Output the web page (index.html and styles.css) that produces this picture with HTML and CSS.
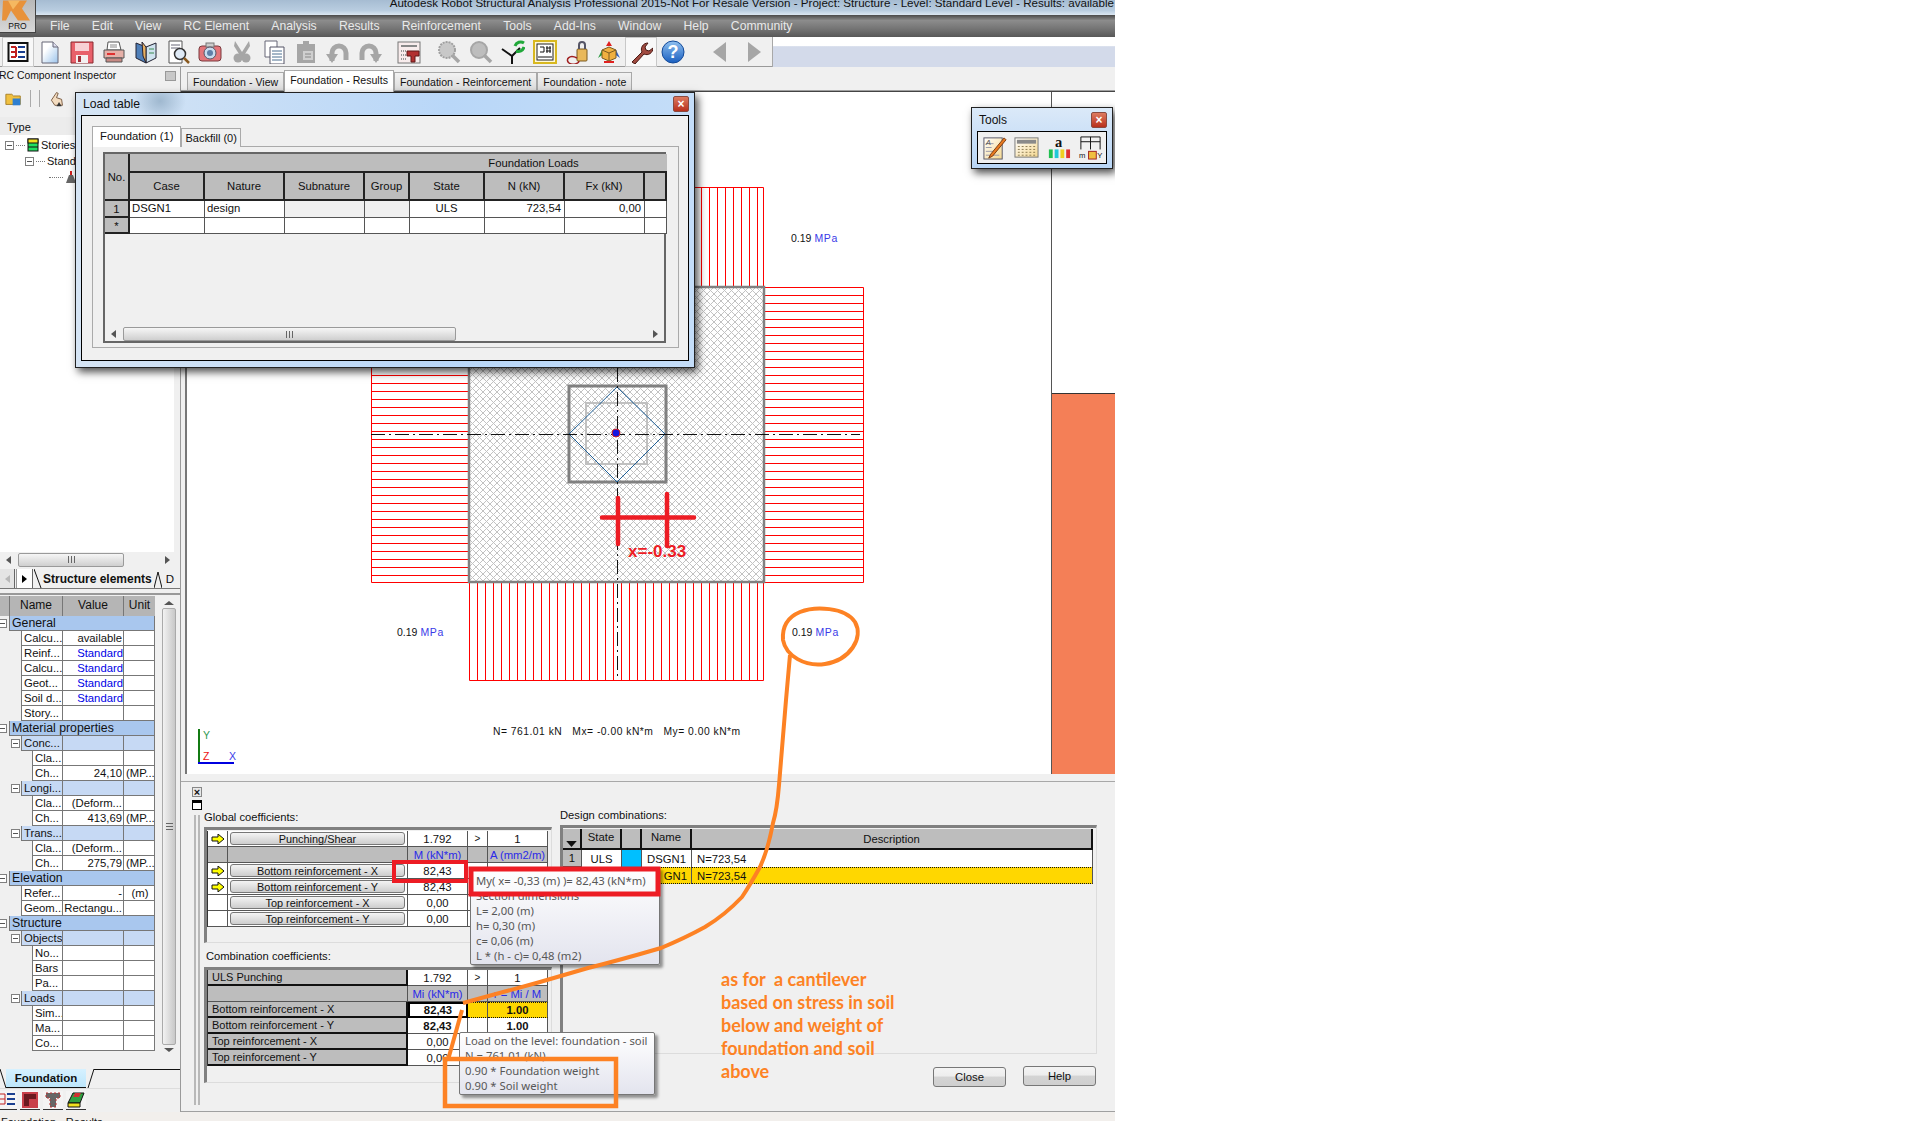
FILE: index.html
```html
<!DOCTYPE html>
<html lang="en">
<head>
    <meta charset="UTF-8">
    <title>Autodesk Robot Structural Analysis - Foundation Results</title>
    <link rel="stylesheet" href="styles.css">
</head>
<body>
<svg class="defs" aria-hidden="true">
    <defs>
        <linearGradient id="docfill" x1="0" y1="0" x2="1" y2="1"><stop offset="0.3" stop-color="#fff"/><stop offset="1" stop-color="#9cc4ec"/></linearGradient>
        <linearGradient id="helpfill" x1="0" y1="0" x2="0" y2="1"><stop offset="0" stop-color="#8fc0f0"/><stop offset="1" stop-color="#1a5fc0"/></linearGradient>
        <linearGradient id="padfill" x1="0" y1="0" x2="1" y2="1"><stop offset="0" stop-color="#fff"/><stop offset="1" stop-color="#f5d890"/></linearGradient>
        <pattern id="hatch-h" patternUnits="userSpaceOnUse" width="8" height="8" y="287"><rect width="8" height="1" fill="#ff0000"/></pattern>
        <pattern id="hatch-v" patternUnits="userSpaceOnUse" width="8" height="8" x="469"><rect width="1" height="8" fill="#ff0000"/></pattern>
        <pattern id="cross" patternUnits="userSpaceOnUse" width="7" height="7"><path d="M0 0L7 7M7 0L0 7" stroke="#c2c2c2" stroke-width="1" fill="none"/></pattern>
    </defs>
</svg>

<div class="app">
    <div class="titlebar"><span>Autodesk Robot Structural Analysis Professional 2015-Not For Resale Version - Project: Structure - Level: Standard Level - Results: available</span></div>

    <nav class="menubar">
        <span>File</span><span>Edit</span><span>View</span><span>RC Element</span><span>Analysis</span><span>Results</span><span>Reinforcement</span><span>Tools</span><span>Add-Ins</span><span>Window</span><span>Help</span><span>Community</span>
    </nav>

    <div class="toolbar">
        <div class="tb-btn on"><svg viewBox="0 0 24 24"><rect x="2.5" y="3" width="19" height="18" fill="#fff" stroke="#111" stroke-width="2"/><path d="M5 7h5M5 12h5M5 17h5M10 7v10" stroke="#c02020" stroke-width="2" fill="none"/><path d="M12 7h7M12 12h7M12 17h7" stroke="#1a3f90" stroke-width="2"/></svg></div>
        <div class="tb-btn"><svg viewBox="0 0 24 24"><path d="M4 2h11l5 5v16H4z" fill="url(#docfill)" stroke="#667" stroke-width="1"/><path d="M15 2v5h5" fill="#dde" stroke="#667"/></svg></div>
        <div class="tb-btn"><svg viewBox="0 0 24 24"><path d="M1 2h22v21H1z" fill="#e8606a" stroke="#8a2a30"/><rect x="5" y="3" width="14" height="8" fill="#f8d0d4"/><rect x="6" y="15" width="12" height="8" fill="#f3f0f0"/><rect x="8" y="16" width="3" height="6" fill="#a03038"/></svg></div>
        <div class="tb-btn"><svg viewBox="0 0 24 24"><path d="M6 2h11l2 8H5z" fill="#fff" stroke="#555"/><path d="M8 5h7M8 7h7" stroke="#888"/><path d="M2 10h20v8H2z" fill="#e6b0a8" stroke="#555"/><path d="M4 18h16v4H4z" fill="#c78a84" stroke="#555"/><path d="M5 14h8" stroke="#e03030" stroke-width="2"/></svg></div>
        <div class="tb-btn"><svg viewBox="0 0 24 24"><path d="M12 7L2 3v15l10 5z" fill="#4f7fb8" stroke="#223"/><path d="M12 7l10-4v15l-10 5z" fill="#cfe2ee" stroke="#223"/><path d="M12 7l-4-5 1 14 3 7z" fill="#e8b060" stroke="#223"/><path d="M15 9h5M15 13h5" stroke="#3a8a50"/></svg></div>
        <div class="tb-btn"><svg viewBox="0 0 24 24"><path d="M3 1h13v22H3z" fill="#fff" stroke="#555"/><path d="M5 5h9M5 8h9" stroke="#667"/><circle cx="14" cy="14" r="5.5" fill="#dfeaf6" stroke="#333" stroke-width="1.5"/><path d="M18 18l5 5" stroke="#8a5a20" stroke-width="2.5"/></svg></div>
        <div class="tb-btn"><svg viewBox="0 0 24 24"><rect x="1" y="6" width="22" height="15" rx="3" fill="#e4757a" stroke="#7a3a3e"/><rect x="8" y="3" width="8" height="4" fill="#ccc" stroke="#777"/><circle cx="12" cy="13" r="6" fill="#c8dcee" stroke="#556"/><circle cx="12" cy="13" r="3" fill="#5f7fa8"/></svg></div>
        <div class="tb-btn"><svg viewBox="0 0 24 24"><path d="M5 1l7 11 7-11 1 5-5 8-3 3-3-3L4 6z" fill="#a6a6a6"/><circle cx="8" cy="18" r="4.500" fill="#a6a6a6"/><circle cx="16" cy="18" r="4.500" fill="#a6a6a6"/></svg></div>
        <div class="tb-btn"><svg viewBox="0 0 24 24"><path d="M3 1h12v16H3z" fill="#fff" stroke="#667"/><path d="M8 7h14v17H8z" fill="#fff" stroke="#556"/><path d="M10 11h10M10 14h10M10 17h10M10 20h10" stroke="#4a6f90"/></svg></div>
        <div class="tb-btn"><svg viewBox="0 0 24 24"><path d="M3 4h6V1h6v3h6v19H3z" fill="#a6a6a6"/><path d="M9 11h10v9H9z" fill="#cfcfcf"/><path d="M11 14h6M11 17h6" stroke="#888"/></svg></div>
        <div class="tb-btn"><svg viewBox="0 0 24 24"><path d="M6 21V13a7 7 0 0 1 14 0v7" fill="none" stroke="#a6a6a6" stroke-width="5"/><path d="M0 14l6 9 6-9z" fill="#a6a6a6"/></svg></div>
        <div class="tb-btn"><svg viewBox="0 0 24 24"><path d="M18 21V13a7 7 0 0 0-14 0v7" fill="none" stroke="#a6a6a6" stroke-width="5"/><path d="M24 14l-6 9-6-9z" fill="#a6a6a6"/></svg></div>
        <div class="tb-btn mt"><svg viewBox="0 0 24 24"><rect x="1" y="2" width="22" height="21" fill="#f8ecec" stroke="#777"/><path d="M4 6h16" stroke="#888" stroke-width="2"/><path d="M4 11h6M4 15h6M4 19h6" stroke="#999" stroke-dasharray="1 1" stroke-width="2"/><path d="M10 11h12v5h-4v6h-4v-6h-4z" fill="#b23030" stroke="#601818"/></svg></div>
        <div class="tb-btn ml"><svg viewBox="0 0 24 24"><circle cx="10" cy="10" r="8" fill="#c8c8c8" stroke="#a0a0a0" stroke-width="2" stroke-dasharray="2 1"/><path d="M15 15l7 7" stroke="#a6a6a6" stroke-width="3.500"/></svg></div>
        <div class="tb-btn"><svg viewBox="0 0 24 24"><circle cx="10" cy="10" r="8" fill="#bdbdbd" stroke="#a6a6a6" stroke-width="2"/><path d="M15 15l7 7" stroke="#a6a6a6" stroke-width="3.500"/></svg></div>
        <div class="tb-btn"><svg viewBox="0 0 24 24"><path d="M1 9l10 7M11 16v8M11 16l8-8" stroke="#111" stroke-width="2" fill="none"/><path d="M14 6a6 6 0 0 1 9-3M23 7a6 6 0 0 1-8 4" stroke="#21a83a" stroke-width="3" fill="none"/></svg></div>
        <div class="tb-btn"><svg viewBox="0 0 24 24"><rect x="1" y="1" width="22" height="22" fill="#fff9d8" stroke="#d8b820" stroke-width="2"/><rect x="4" y="4" width="16" height="16" fill="#fff" stroke="#222"/><path d="M7 7h4v5H7M14 6v7M17 6v7M13 8h5M13 11h5M5 17h14" stroke="#111" fill="none"/></svg></div>
        <div class="tb-btn"><svg viewBox="0 0 24 24"><rect x="12" y="9" width="10" height="12" rx="1" fill="#e9b85a" stroke="#7a5a20"/><path d="M14 9V5a3 3 0 0 1 6 0v4" fill="none" stroke="#556" stroke-width="2"/><path d="M12 18C4 14 0 20 4 23s10 0 10-2" fill="none" stroke="#a02020" stroke-width="1.500"/></svg></div>
        <div class="tb-btn"><svg viewBox="0 0 24 24"><path d="M12 1l3 5H9z" fill="#e02020"/><path d="M1 18l4-8 3 3z" fill="#2a9a40"/><path d="M23 18l-4-8-3 3z" fill="#3060c0"/><path d="M12 7l7 3v8l-7 3-7-3v-8z" fill="#f0b040" stroke="#7a5a20"/><path d="M5 10l7 3 7-3M12 13v8" stroke="#7a5a20" fill="none"/><path d="M7 22h10" stroke="#e02020" stroke-width="2"/></svg></div>
        <div class="tb-btn on"><svg viewBox="0 0 24 24"><path d="M3 22l10-10c-2-4 1-9 6-9l-3 4 1 3 3 1 4-3c0 5-5 8-9 6L6 24z" fill="#a04a40" stroke="#4a1a14"/></svg></div>
        <div class="tb-btn"><svg viewBox="0 0 24 24"><circle cx="12" cy="12" r="11" fill="url(#helpfill)" stroke="#134a9a"/><text x="12" y="18" class="help-mark">?</text></svg></div>
        <div class="tb-btn gap"><svg viewBox="0 0 24 24"><path d="M17 2v20L4 12z" fill="#a6a6a6"/></svg></div>
        <div class="tb-btn"><svg viewBox="0 0 24 24"><path d="M7 2v20l13-10z" fill="#a6a6a6"/></svg></div>
        <div class="tb-rest"></div>
    </div>

    <div class="workspace">
        <aside class="inspector">
            <div class="insp-head"><span>RC Component Inspector</span><i class="insp-close"></i></div>
            <div class="insp-tools">
                <svg viewBox="0 0 20 20" class="ic16"><path d="M1 5h7l2 2h8v10H1z" fill="#f0c040" stroke="#a07a20"/><rect x="9" y="10" width="9" height="8" fill="#2f7fd0"/></svg>
                <i class="vsep"></i><i class="vsep"></i>
                <svg viewBox="0 0 20 20" class="ic16"><path d="M4 12l6-9 2 1-2 5 6 2 1 7H8z" fill="#f3dcc0" stroke="#6a4a30"/><path d="M13 14l3 5h-6z" fill="#333"/></svg>
            </div>
            <div class="type-head">Type</div>
            <div class="tree">
                <div class="tree-row l0"><i class="pm"></i><i class="dots"></i><svg viewBox="0 0 12 14" class="ic12"><rect x="1" y="1" width="10" height="12" fill="#20e060" stroke="#111"/><rect x="1" y="1" width="10" height="4" fill="#f0e020" stroke="#111"/><path d="M1 9h10" stroke="#111"/></svg><span>Stories</span></div>
                <div class="tree-row l1"><i class="pm"></i><i class="dots"></i><span>Standard Level</span></div>
                <div class="tree-row l2"><i class="dots long"></i><svg viewBox="0 0 12 14" class="ic12"><path d="M1 13l3-8h4l3 8z" fill="#666"/><rect x="5" y="1" width="2" height="4" fill="#d02020"/></svg></div>
            </div>
            <div class="hscroll"><b class="arr-l"></b><div class="thumb thumb-left"><i class="grip"></i></div><b class="arr-r"></b></div>
            <div class="sheet-tabs">
                <div class="sheet-arrow"><b class="arr-l pale"></b></div>
                <div class="sheet-arrow"><b class="arr-r dark"></b></div>
                <svg class="slant" viewBox="0 0 8 19"><path d="M0 0L7 19" stroke="#111"/></svg>
                <span class="sheet-name">Structure elements</span>
                <svg class="slant" viewBox="0 0 8 19"><path d="M0 19L4 3L8 19" stroke="#111" fill="none"/></svg>
                <span class="sheet-other">D</span>
            </div>
            <div class="prop-area">
                <div class="prop-grid">
                    <div class="prop-head"><span></span><span>Name</span><span>Value</span><span>Unit</span></div>
                    <div class="prop lv0"><i class="pm"></i><span>General</span></div>
                    <div class="prop lv1"><i></i><span>Calcu...</span><span class="r">available</span><span></span></div>
                    <div class="prop lv1"><i></i><span>Reinf...</span><span class="r link">Standard</span><span></span></div>
                    <div class="prop lv1"><i></i><span>Calcu...</span><span class="r link">Standard</span><span></span></div>
                    <div class="prop lv1"><i></i><span>Geot...</span><span class="r link">Standard</span><span></span></div>
                    <div class="prop lv1"><i></i><span>Soil d...</span><span class="r link">Standard</span><span></span></div>
                    <div class="prop lv1"><i></i><span>Story...</span><span></span><span></span></div>
                    <div class="prop lv0"><i class="pm"></i><span>Material properties</span></div>
                    <div class="prop grp"><i class="pm"></i><span>Conc...</span><span></span><span></span></div>
                    <div class="prop lv2"><i></i><span>Cla...</span><span></span><span></span></div>
                    <div class="prop lv2"><i></i><span>Ch...</span><span class="r">24,10</span><span>(MP...</span></div>
                    <div class="prop grp"><i class="pm"></i><span>Longi...</span><span></span><span></span></div>
                    <div class="prop lv2"><i></i><span>Cla...</span><span class="r">(Deform...</span><span></span></div>
                    <div class="prop lv2"><i></i><span>Ch...</span><span class="r">413,69</span><span>(MP...</span></div>
                    <div class="prop grp"><i class="pm"></i><span>Trans...</span><span></span><span></span></div>
                    <div class="prop lv2"><i></i><span>Cla...</span><span class="r">(Deform...</span><span></span></div>
                    <div class="prop lv2"><i></i><span>Ch...</span><span class="r">275,79</span><span>(MP...</span></div>
                    <div class="prop lv0"><i class="pm"></i><span>Elevation</span></div>
                    <div class="prop lv1"><i></i><span>Refer...</span><span class="r">-</span><span class="ctr">(m)</span></div>
                    <div class="prop lv1"><i></i><span>Geom...</span><span class="r">Rectangu...</span><span></span></div>
                    <div class="prop lv0"><i class="pm"></i><span>Structure</span></div>
                    <div class="prop grp"><i class="pm"></i><span>Objects</span><span></span><span></span></div>
                    <div class="prop lv2"><i></i><span>No...</span><span></span><span></span></div>
                    <div class="prop lv2"><i></i><span>Bars</span><span></span><span></span></div>
                    <div class="prop lv2"><i></i><span>Pa...</span><span></span><span></span></div>
                    <div class="prop grp"><i class="pm"></i><span>Loads</span><span></span><span></span></div>
                    <div class="prop lv2"><i></i><span>Sim...</span><span></span><span></span></div>
                    <div class="prop lv2"><i></i><span>Ma...</span><span></span><span></span></div>
                    <div class="prop lv2"><i></i><span>Co...</span><span></span><span></span></div>
                </div>
                <div class="vscroll"><b class="arr-u"></b><div class="vthumb"><i class="vgrip"></i></div><b class="arr-d"></b></div>
            </div>
            <div class="found-tabs">
                <svg class="slant" viewBox="0 0 8 19"><path d="M2 0L8 19" stroke="#111"/></svg>
                <span class="found-name">Foundation</span>
                <svg class="slant" viewBox="0 0 8 19"><path d="M8 0L2 19" stroke="#111"/></svg>
                <i class="found-rest"></i>
            </div>
            <div class="found-tools">
                <svg viewBox="0 0 18 18" class="ic18"><path d="M2 3h5M2 8h5M2 13h5M7 3v10" stroke="#c02020" fill="none"/><path d="M9 3h8M9 8h8M9 13h8" stroke="#1a3f90" stroke-width="2"/></svg>
                <svg viewBox="0 0 18 18" class="ic18"><rect x="1" y="1" width="16" height="16" fill="#c9404a"/><path d="M3 3h12v5H8v7H3z" fill="#6a1a20"/></svg>
                <svg viewBox="0 0 18 18" class="ic18"><path d="M2 2h14v5h-4v9H6V7H2z" fill="#666" stroke="#c03030" stroke-dasharray="2 2"/></svg>
                <svg viewBox="0 0 18 18" class="ic18"><path d="M1 12L6 2h11l-4 10z" fill="#30a040" stroke="#111"/><path d="M8 2h6l-2 4H6z" fill="#d03030"/><path d="M1 12h12v4H1z" fill="#f0e020" stroke="#111"/></svg>
            </div>
        </aside>

        <main class="results">
            <div class="doc-tabs">
                <span class="doc-tab">Foundation - View</span>
                <span class="doc-tab active">Foundation - Results</span>
                <span class="doc-tab">Foundation - Reinforcement</span>
                <span class="doc-tab">Foundation - note</span>
            </div>
            <div class="view-row">
                <svg class="drawing" viewBox="187 92 864 682" width="864" height="682">
                    <rect x="371" y="287" width="98" height="295" fill="url(#hatch-h)"/>
                    <rect x="764" y="287" width="99" height="295" fill="url(#hatch-h)"/>
                    <rect x="469" y="187" width="295" height="100" fill="url(#hatch-v)"/>
                    <rect x="469" y="582" width="295" height="98" fill="url(#hatch-v)"/>
                    <path d="M371.500 287.500H863.500V582.500H371.500ZM469.500 187.500H763.500V680.500H469.500Z" fill="none" stroke="#ff0000"/>
                    <rect x="469" y="287" width="295" height="295" fill="#fff"/>
                    <rect x="469" y="287" width="295" height="295" fill="url(#cross)" stroke="#808080" stroke-width="2.500"/>
                    <rect x="569" y="386" width="97" height="96" fill="none" stroke="#808080" stroke-width="3"/>
                    <rect x="586" y="403" width="61" height="61" fill="none" stroke="#c0c0c0" stroke-width="2"/>
                    <path d="M617 387L665 434L617 482L569 434Z" fill="none" stroke="#1f5f96" stroke-width="1"/>
                    <path d="M371 434.500H860M617.500 368V680" fill="none" stroke="#111" stroke-width="1" stroke-dasharray="14 4 2 4"/>
                    <circle cx="616" cy="433" r="4" fill="#1414e0" stroke="#d02020" stroke-width="1"/>
                    <text x="791" y="242" class="dim">0.19<tspan class="dim-unit" dx="3">MPa</tspan></text>
                    <text x="397" y="636" class="dim">0.19<tspan class="dim-unit" dx="3">MPa</tspan></text>
                    <text x="792" y="636" class="dim">0.19<tspan class="dim-unit" dx="3">MPa</tspan></text>
                    <text x="493" y="735" class="sum">N= 761.01 kN   Mx= -0.00 kN*m   My= 0.00 kN*m</text>
                    <path d="M199 729V763" stroke="#137a13" stroke-width="2"/>
                    <path d="M198 763H234" stroke="#0000e0" stroke-width="2"/>
                    <text x="203" y="739" class="axis ax-y">Y</text>
                    <text x="203" y="760" class="axis ax-z">Z</text>
                    <text x="229" y="760" class="axis ax-x">X</text>
                </svg>
                <div class="side-view"><div class="side-fill"></div></div>
            </div>

            <div class="panel">
                <div class="dock">
                    <i class="dock-btn">×</i>
                    <i class="dock-btn box"></i>
                    <i class="dock-rail"></i>
                </div>
                <div class="coeffs">
                    <div class="lbl">Global coefficients:</div>
                    <div class="frame frame-a">
                        <div class="ct ct-a">
                            <div class="c ar"><svg viewBox="0 0 14 10"><path d="M1 3h6V0l6 5-6 5V7H1z" fill="#ffff00" stroke="#111"/></svg></div><div class="c bc"><button class="cbtn">Punching/Shear</button></div><div class="c">1.792</div><div class="c gt">&gt;</div><div class="c">1</div>
                            <div class="c g"></div><div class="c g"></div><div class="c g blue">M (kN*m)</div><div class="c g"></div><div class="c g blue">A (mm2/m)</div>
                            <div class="c ar"><svg viewBox="0 0 14 10"><path d="M1 3h6V0l6 5-6 5V7H1z" fill="#ffff00" stroke="#111"/></svg></div><div class="c bc"><button class="cbtn">Bottom reinforcement - X</button></div><div class="c">82,43</div><div class="c"></div><div class="c"></div>
                            <div class="c ar"><svg viewBox="0 0 14 10"><path d="M1 3h6V0l6 5-6 5V7H1z" fill="#ffff00" stroke="#111"/></svg></div><div class="c bc"><button class="cbtn">Bottom reinforcement - Y</button></div><div class="c">82,43</div><div class="c"></div><div class="c"></div>
                            <div class="c ar"></div><div class="c bc"><button class="cbtn">Top reinforcement - X</button></div><div class="c">0,00</div><div class="c"></div><div class="c"></div>
                            <div class="c ar"></div><div class="c bc"><button class="cbtn">Top reinforcement - Y</button></div><div class="c">0,00</div><div class="c"></div><div class="c"></div>
                        </div>
                    </div>
                    <div class="lbl lbl-b">Combination coefficients:</div>
                    <div class="frame frame-b">
                        <div class="ct ct-b">
                            <div class="c rl">ULS Punching</div><div class="c">1.792</div><div class="c gt">&gt;</div><div class="c">1</div>
                            <div class="c g"></div><div class="c g blue">Mi (kN*m)</div><div class="c g"></div><div class="c g blue">r = Mi / M</div>
                            <div class="c rl">Bottom reinforcement - X</div><div class="c sel">82,43</div><div class="c gold"></div><div class="c gold b">1.00</div>
                            <div class="c rl">Bottom reinforcement - Y</div><div class="c b">82,43</div><div class="c"></div><div class="c b">1.00</div>
                            <div class="c rl">Top reinforcement - X</div><div class="c">0,00</div><div class="c"></div><div class="c"></div>
                            <div class="c rl">Top reinforcement - Y</div><div class="c">0,00</div><div class="c"></div><div class="c"></div>
                        </div>
                    </div>
                </div>
                <div class="combos">
                    <div class="lbl">Design combinations:</div>
                    <div class="frame frame-c">
                        <div class="dt">
                            <div class="d dh"><svg viewBox="0 0 14 8" class="sort"><path d="M0 0h14L7 8z" fill="#111"/></svg></div><div class="d dh top">State</div><div class="d dh"></div><div class="d dh top">Name</div><div class="d dh">Description</div>
                            <div class="d num">1</div><div class="d">ULS</div><div class="d sky"></div><div class="d">DSGN1</div><div class="d left">N=723,54</div>
                            <div class="d num"></div><div class="d hl"></div><div class="d hl"></div><div class="d hl hl-name">GN1</div><div class="d hl left">N=723,54</div>
                        </div>
                    </div>
                    <div class="combo-btns">
                        <button class="pbtn low">Close</button>
                        <button class="pbtn">Help</button>
                    </div>
                </div>
            </div>
        </main>
    </div>

    <div class="statusbar"><span>Foundation - Results</span></div>

    <div class="pro-btn">
        <svg viewBox="0 0 36 20" class="pro-logo"><path d="M3 0h24L22 8l8 12H18L11 10 6 20H2z" fill="#e8923a"/><path d="M8 0h12l-7 9z" fill="#f5b860"/></svg>
        <span>PRO</span>
    </div>

    <section class="win load-win">
        <div class="win-title"><span>Load table</span><i class="win-close">×</i></div>
        <div class="win-body">
            <div class="lt-tabs"><span class="lt-tab active">Foundation (1)</span><span class="lt-tab">Backfill (0)</span></div>
            <div class="lt-page">
                <div class="lt-grid">
                    <div class="lh lh-no">No.</div><div class="lh lh-span">Foundation Loads</div>
                    <div class="lh">Case</div><div class="lh">Nature</div><div class="lh">Subnature</div><div class="lh">Group</div><div class="lh">State</div><div class="lh">N (kN)</div><div class="lh">Fx (kN)</div><div class="lh"></div>
                    <div class="lh ln">1</div><div class="ld">DSGN1</div><div class="ld">design</div><div class="ld off"></div><div class="ld off"></div><div class="ld ctr">ULS</div><div class="ld r">723,54</div><div class="ld r">0,00</div><div class="ld"></div>
                    <div class="lh ln">*</div><div class="ld"></div><div class="ld"></div><div class="ld"></div><div class="ld"></div><div class="ld"></div><div class="ld"></div><div class="ld"></div><div class="ld"></div>
                </div>
                <div class="hscroll lt-scroll"><b class="arr-l"></b><div class="thumb thumb-lt"><i class="grip"></i></div><b class="arr-r"></b></div>
            </div>
        </div>
    </section>

    <section class="win tools-win">
        <div class="win-title small"><span>Tools</span><i class="win-close">×</i></div>
        <div class="tools-body">
            <svg viewBox="0 0 26 26"><rect x="2" y="3" width="19" height="22" fill="url(#padfill)" stroke="#556"/><path d="M4 9h8M4 13h6M4 17h10M4 21h14" stroke="#99a"/><text x="4" y="10" class="pad-a">A</text><path d="M9 20L23 3l2 2L11 22l-4 2z" fill="#e87a20" stroke="#7a3a10"/></svg>
            <svg viewBox="0 0 26 26"><rect x="1" y="3" width="24" height="20" fill="url(#padfill)" stroke="#777"/><rect x="3" y="5" width="20" height="4" fill="#8a8a8a"/><path d="M4 12h18M4 15h18M4 18h18M4 21h18" stroke="#8a7a50" stroke-dasharray="2 2"/></svg>
            <svg viewBox="0 0 26 26"><text x="13" y="12" class="tool-a">a</text><rect x="3" y="15" width="4" height="9" fill="#20c050"/><rect x="9" y="15" width="4" height="9" fill="#20c8d8"/><rect x="15" y="15" width="4" height="9" fill="#f0d020"/><rect x="21" y="15" width="4" height="9" fill="#e03030"/></svg>
            <svg viewBox="0 0 26 26"><path d="M3 15V2h20v13M3 7h20M13 2v13" fill="none" stroke="#111"/><text x="1" y="24" class="tool-m">m</text><rect x="11" y="17" width="8" height="8" fill="#f0c040" stroke="#a02020"/><text x="20" y="24" class="tool-m">Y</text></svg>
        </div>
    </section>

    <div class="tip tip-a">
        <div>My( x= -0,33 (m) )= 82,43 (kN*m)</div>
        <div>Section dimensions</div>
        <div>L= 2,00 (m)</div>
        <div>h= 0,30 (m)</div>
        <div>c= 0,06 (m)</div>
        <div>L * (h - c)= 0,48 (m2)</div>
    </div>
    <div class="tip tip-b">
        <div>Load on the level: foundation - soil</div>
        <div>N = 761,01 (kN)</div>
        <div>0.90 * Foundation weight</div>
        <div>0.90 * Soil weight</div>
    </div>

    <svg class="markup" viewBox="0 0 1115 1121" width="1115" height="1121">
        <path d="M618 498V544M667 494V546M602 517.500H694" stroke="#ed1c24" stroke-width="4.500" stroke-linecap="round" fill="none"/>
        <text x="628" y="557" class="mark-x">x=-0.33</text>
        <rect x="394" y="862" width="72" height="19" fill="none" stroke="#ed1c24" stroke-width="4"/>
        <rect x="471" y="869" width="187" height="25" fill="none" stroke="#ed1c24" stroke-width="5"/>
        <path d="M800 612C815 606 845 607 855 622C864 638 850 660 825 664C805 667 786 656 783 640C782 627 788 617 800 612Z" fill="none" stroke="#fd8224" stroke-width="4"/>
        <path d="M790 655L786 700L779 785Q777 810 773 823Q768 850 760 867Q750 885 742 897Q725 915 705 927Q685 938 661 948Q620 960 588 968L540 982L463 1003" fill="none" stroke="#fd8224" stroke-width="4"/>
        <path d="M462 1010L448 1060" fill="none" stroke="#fd8224" stroke-width="4"/>
        <rect x="445" y="1059" width="171" height="47" fill="none" stroke="#fd8224" stroke-width="4.500"/>
    </svg>

    <div class="note">as for  a cantilever
based on stress in soil
below and weight of
foundation and soil
above</div>
</div>
</body>
</html>
```

FILE: styles.css
```css
* {
    box-sizing: border-box;
}

body {
    margin: 0;
    background-color: #fff;
    font-family: "Liberation Sans", Arial, sans-serif;
    font-size: 11.3px;
    color: #111;
}

.defs {
    position: absolute;
    width: 0;
    height: 0;
}

.app {
    position: relative;
    width: 1115px;
    height: 1121px;
    overflow: hidden;
    display: flex;
    flex-direction: column;
    background-color: #f0f0f0;
}

/* window chrome */
.titlebar {
    height: 15px;
    overflow: hidden;
    display: flex;
    justify-content: flex-end;
    background: linear-gradient(#a6bcd2 0, #b9cde0 70%, #dbe7f2 100%);
    font-size: 11.6px;
    line-height: 6px;
    white-space: nowrap;
    color: #111;
    padding-right: 1px;
}

.menubar {
    height: 22px;
    display: flex;
    align-items: center;
    gap: 22.2px;
    padding-left: 50px;
    background: linear-gradient(#4a4a4a 0, #8c8c8c 25%, #767676 60%, #585858 100%);
    color: #e9e9e9;
    font-size: 12.2px;
    white-space: nowrap;
}

.toolbar {
    height: 30px;
    display: flex;
    align-items: center;
    padding-left: 2px;
    background-color: #f0f0f0;
    border-bottom: 1px solid #9a9a9a;
}

.tb-btn {
    width: 32px;
    height: 30px;
    flex: none;
    display: flex;
    align-items: center;
    justify-content: center;
}

.tb-btn svg {
    width: 24px;
    height: 24px;
}

.tb-btn.on {
    background-color: #f8f8f8;
    border: 1px solid #c8c8c8;
}

.tb-btn.mt {
    margin-left: 7px;
}

.tb-btn.ml {
    margin-left: 8px;
}

.tb-btn.gap {
    margin-left: 16px;
}

.tb-rest {
    flex: 1;
    height: 30px;
    margin-left: 3px;
    border-left: 1px solid #a8a8a8;
    background: linear-gradient(#fff 0, #fff 30%, #d3daea 32%);
}

.workspace {
    height: 1045px;
    display: flex;
}

/* left inspector */
.inspector {
    width: 181px;
    flex: none;
    display: flex;
    flex-direction: column;
    border-right: 1px solid #9a9a9a;
}

.insp-head {
    height: 19px;
    display: flex;
    align-items: flex-start;
    justify-content: space-between;
    padding-right: 4px;
    font-size: 10.4px;
    line-height: 17px;
    white-space: nowrap;
    margin-left: -1px;
}

.insp-close {
    width: 11px;
    height: 10px;
    margin-top: 4px;
    background-color: #c8c8c8;
    border: 1px solid #999;
}

.insp-tools {
    height: 31px;
    padding: 4px 0 0 5px;
    display: flex;
    align-items: flex-start;
    gap: 8px;
}

.ic16 {
    width: 17px;
    height: 17px;
}

.vsep {
    width: 1px;
    height: 17px;
    background-color: #aaa;
}

.type-head {
    height: 18px;
    line-height: 20px;
    padding-left: 7px;
    font-size: 11px;
    background-color: #ececec;
}

.tree {
    height: 417px;
    padding-top: 2px;
    background-color: #fff;
    font-size: 11px;
    overflow: hidden;
    margin-right: 6px;
}

.tree-row {
    height: 16px;
    display: flex;
    align-items: center;
    white-space: nowrap;
    gap: 2px;
}

.tree-row.l0 {
    padding-left: 5px;
}

.tree-row.l1 {
    padding-left: 25px;
}

.tree-row.l2 {
    padding-left: 49px;
}

.pm {
    width: 9px;
    height: 9px;
    flex: none;
    border: 1px solid #808080;
    background: linear-gradient(#555, #555) center / 5px 1px no-repeat #fff;
}

.dots {
    width: 9px;
    border-top: 1px dotted #777;
}

.dots.long {
    width: 14px;
}

.ic12 {
    width: 12px;
    height: 14px;
}

.hscroll {
    height: 15px;
    display: flex;
    align-items: center;
    justify-content: space-between;
    background-color: #f0f0f0;
    padding: 0 6px;
    margin-right: 4px;
}

.thumb {
    height: 14px;
    display: flex;
    align-items: center;
    justify-content: center;
    border: 1px solid #9a9a9a;
    border-radius: 2px;
    background: linear-gradient(#f6f6f6, #cfcfcf);
}

.thumb-left {
    width: 106px;
    margin-right: auto;
    margin-left: 7px;
}

.grip {
    width: 7px;
    height: 7px;
    background: repeating-linear-gradient(90deg, #666 0, #666 1px, transparent 1px, transparent 3px);
}

.arr-l,
.arr-r,
.arr-u,
.arr-d {
    width: 0;
    height: 0;
    flex: none;
    border-style: solid;
    border-color: transparent;
}

.arr-l {
    border-width: 4px 5px 4px 0;
    border-right-color: #555;
}

.arr-r {
    border-width: 4px 0 4px 5px;
    border-left-color: #555;
}

.arr-u {
    border-width: 0 5px 4px;
    border-bottom-color: #555;
}

.arr-d {
    border-width: 4px 5px 0;
    border-top-color: #555;
}

.arr-l.pale {
    border-right-color: #b8b8b8;
}

.arr-r.dark {
    border-left-color: #000;
}

.sheet-tabs {
    height: 20px;
    margin-top: 2px;
    display: flex;
    align-items: center;
    border-bottom: 1px solid #777;
    white-space: nowrap;
    overflow: hidden;
}

.sheet-arrow {
    width: 15px;
    height: 19px;
    margin-right: 1px;
    display: flex;
    align-items: center;
    justify-content: center;
    background-color: #e4e4e4;
    border-right: 1px solid #666;
}

.sheet-arrow + .sheet-arrow {
    width: 17px;
    background-color: #fff;
    border-left: 1px solid #999;
}

.slant {
    width: 8px;
    height: 19px;
    flex: none;
}

.sheet-name {
    font-size: 12px;
    font-weight: bold;
    padding: 0 2px 0 1px;
}

.sheet-other {
    padding-left: 4px;
    font-size: 11.5px;
}

.prop-area {
    height: 476px;
    margin-top: 4px;
    padding-top: 1px;
    display: flex;
    align-items: flex-start;
    border-top: 2px solid #999;
}

.prop-grid {
    width: 155px;
    font-size: 11.3px;
    flex: none;
}

.prop-head {
    height: 20px;
    display: grid;
    grid-template-columns: 9px 53px 61px 32px;
    background-color: #b5b5b5;
    font-size: 12px;
}

.prop-head span {
    text-align: center;
    line-height: 18px;
    border-left: 1px solid #777;
}

.prop-head span:first-child {
    border-left: 0;
}

.prop {
    height: 15px;
    display: grid;
    line-height: 14px;
    white-space: nowrap;
    overflow: hidden;
}

.prop > span {
    overflow: hidden;
    padding: 0 0 0 2px;
    height: 15px;
    border-left: 1px solid #777;
    border-bottom: 1px solid #777;
    background-color: #fff;
}

.prop > span:last-child {
    border-right: 1px solid #777;
}

.prop .pm {
    align-self: center;
    margin-left: 11px;
}

.lv0 {
    grid-template-columns: 9px 146px;
    font-size: 12.3px;
}

.lv0 .pm {
    margin-left: -2px;
}

.lv0 > span {
    background-color: #a9c7ee;
}

.lv1,
.grp {
    grid-template-columns: 21px 41px 61px 32px;
}

.lv2 {
    grid-template-columns: 32px 30px 61px 32px;
}

.grp > span {
    background-color: #c6d9f4;
    border-bottom-color: #777;
}

.prop > .r {
    padding-left: 0;
    padding-right: 1px;
    text-align: right;
}

.prop > .link {
    color: #0000e6;
    padding-right: 0;
}

.prop > .ctr {
    text-align: center;
}

.vscroll {
    width: 14px;
    margin-left: 7px;
    height: 456px;
    display: flex;
    flex-direction: column;
    align-items: center;
    justify-content: space-between;
    padding-top: 5px;
}

.vthumb {
    width: 14px;
    height: 437px;
    display: flex;
    align-items: center;
    justify-content: center;
    border: 1px solid #aaa;
    border-radius: 2px;
    background: linear-gradient(90deg, #f2f2f2, #c8c8c8);
}

.vgrip {
    width: 7px;
    height: 7px;
    background: repeating-linear-gradient(0deg, #666 0, #666 1px, transparent 1px, transparent 3px);
}

.found-tabs {
    height: 19px;
    display: flex;
    align-items: stretch;
    white-space: nowrap;
}

.found-tabs .slant:first-child {
    margin-left: -2px;
}

.found-name {
    width: 80px;
    font-size: 11.5px;
    font-weight: bold;
    line-height: 19px;
    text-align: center;
    background: linear-gradient(#d6f1ff, #bde6fb);
    border-bottom: 1px solid #111;
}

.found-rest {
    flex: 1;
    border-top: 1px solid #111;
}

.found-tools {
    height: 24px;
    display: flex;
    align-items: center;
    gap: 3px;
    padding-left: 0;
    margin-left: -3px;
    border-top: 1px solid #ddd;
}

.ic18 {
    width: 20px;
    height: 19px;
    background-color: #f4f4f4;
    border-bottom: 1px solid #333;
}

/* document area */
.results {
    flex: 1;
    min-width: 0;
    display: flex;
    flex-direction: column;
}

.doc-tabs {
    height: 24px;
    padding: 5px 0 0 6px;
    display: flex;
    align-items: flex-end;
    border-bottom: 1px solid #a0a0a0;
    white-space: nowrap;
}

.doc-tab {
    height: 18px;
    line-height: 18px;
    padding: 0 5px;
    font-size: 10.6px;
    background: linear-gradient(#f2f2f2, #dcdcdc);
    border: 1px solid #a8a8a8;
    border-bottom: 0;
}

.doc-tab.active {
    height: 22px;
    line-height: 19px;
    padding: 0 5px;
    background: #fff;
    margin-bottom: -2px;
    position: relative;
}

.view-row {
    height: 683px;
    display: flex;
    padding-left: 4px;
    border-top: 1px solid #444;
}

.drawing {
    flex: none;
    box-sizing: content-box;
    background-color: #fff;
    border-left: 2px solid #777;
}

.side-view {
    flex: 1;
    display: flex;
    flex-direction: column;
    justify-content: flex-end;
    background-color: #fff;
    border-left: 1.500px solid #555;
}

.side-fill {
    height: 381px;
    background-color: #f47f57;
    border-top: 1px solid #333;
}

.dim {
    font-size: 10.5px;
    fill: #111;
}

.dim-unit {
    fill: #3a3ae8;
    letter-spacing: 0.6px;
}

.sum {
    font-size: 10.3px;
    letter-spacing: 0.5px;
    white-space: pre;
    fill: #111;
}

.axis {
    font-size: 10.5px;
}

.ax-y {
    fill: #2f9a4f;
}

.ax-z {
    fill: #ee1111;
}

.ax-x {
    fill: #3a3ae8;
}

/* bottom panel */
.panel {
    height: 331px;
    margin-top: 7px;
    display: flex;
    padding-left: 11px;
    border-top: 1.500px solid #a8a8a8;
    border-bottom: 1.500px solid #a0a0a0;
    background-color: #f0f0f0;
}

.dock {
    width: 12px;
    flex: none;
    padding-top: 5px;
    display: flex;
    flex-direction: column;
    gap: 3px;
}

.dock-btn {
    width: 10px;
    height: 10px;
    font-style: normal;
    font-weight: bold;
    font-size: 11px;
    line-height: 9px;
    text-align: center;
    background-color: #e8e8e8;
    border: 1px solid #888;
}

.dock-btn.box {
    background: linear-gradient(#000, #000) top / 100% 2px no-repeat #fff;
    border: 2px solid #000;
    border-width: 1px;
}

.dock-rail {
    width: 6px;
    height: 290px;
    margin: 2px 0 0 2px;
    border-left: 2px solid #b8b8b8;
    border-right: 2px solid #b8b8b8;
}

.coeffs {
    width: 348px;
    flex: none;
    padding-top: 28px;
}

.lbl {
    height: 14px;
    line-height: 14px;
    font-size: 11.2px;
    white-space: nowrap;
}

.lbl-b {
    margin-top: 6px;
    padding-left: 2px;
}

.frame {
    border-top: 3px solid #808080;
    border-left: 3px solid #808080;
    border-right: 1px solid #dcdcdc;
    border-bottom: 1px solid #dcdcdc;
}

.frame-a {
    height: 116px;
    margin-top: 3px;
    padding: 1px 0 0 0;
}

.frame-b {
    height: 116px;
    margin-top: 4px;
    padding: 0;
}

.ct {
    display: grid;
    grid-auto-rows: 16px;
    width: 341px;
    border-left: 1px solid #333;
    font-size: 11.3px;
}

.ct-a {
    grid-template-columns: 20px 180px 60px 20px 60px;
}

.ct-b {
    grid-template-columns: 200px 60px 20px 60px;
}

.c {
    display: flex;
    align-items: center;
    justify-content: center;
    background-color: #fff;
    border-right: 1px solid #555;
    border-bottom: 1px solid #555;
    white-space: nowrap;
    overflow: hidden;
}

.c.g {
    background-color: #bdbdbd;
}

.c.blue {
    color: #2a2ae8;
}

.c.gt {
    font-size: 10px;
}

.c.b {
    font-weight: bold;
}

.c.gold {
    background-color: #ffd700;
    border-bottom: 1px dotted #111;
    border-top: 1px dotted #111;
}

.c.sel {
    font-weight: bold;
    border: 2px solid #000;
}

.c.ar svg {
    width: 14px;
    height: 10px;
}

.c.rl {
    justify-content: flex-start;
    padding-left: 4px;
    font-size: 11px;
    background-color: #bdbdbd;
    border-right: 2px solid #111;
    border-bottom: 2px solid #111;
}

.c.bc {
    padding: 1px 2px;
}

.cbtn {
    width: 100%;
    height: 100%;
    padding: 0;
    font-family: inherit;
    font-size: 10.9px;
    color: #111;
    background: linear-gradient(#f4f4f4, #cdcdcd);
    border: 1px solid #777;
    border-radius: 3px;
}

.combos {
    width: 537px;
    margin-left: 8px;
    flex: none;
    padding-top: 26px;
}

.frame-c {
    height: 229px;
    margin-top: 3px;
    padding: 1px 0 0 0;
}

.dt {
    display: grid;
    grid-template-columns: 19px 40px 20px 50px 401px;
    grid-template-rows: 21px 17px 17px;
    font-size: 11.3px;
}

.d {
    display: flex;
    align-items: center;
    justify-content: center;
    white-space: nowrap;
    background-color: #fff;
    border-right: 1px solid #555;
}

.d.dh {
    background-color: #bdbdbd;
    border-right: 2px solid #111;
    border-bottom: 2px solid #111;
}

.d.dh.top {
    align-items: flex-start;
    padding-top: 2px;
}

.sort {
    width: 11px;
    height: 6px;
    align-self: flex-end;
    margin-bottom: 1px;
}

.d.num {
    background-color: #bdbdbd;
    border-bottom: 1px solid #555;
}

.d.left {
    justify-content: flex-start;
    padding-left: 5px;
}

.d.sky {
    background-color: #00bfff;
}

.d.hl {
    background-color: #ffd700;
    border-top: 1px dotted #111;
    border-bottom: 1px dotted #111;
}

.d.hl-name {
    justify-content: flex-end;
    padding-right: 4px;
}

.combo-btns {
    display: flex;
    justify-content: flex-end;
    align-items: flex-start;
    gap: 17px;
    margin-top: 12px;
    padding-right: 1px;
}

.pbtn {
    width: 73px;
    height: 20px;
    padding: 0;
    font-family: inherit;
    font-size: 11.3px;
    color: #111;
    background: linear-gradient(#f4f4f4 0, #ededed 45%, #d4d4d4 50%, #cfcfcf 100%);
    border: 1px solid #777;
    border-radius: 3px;
}

.pbtn.low {
    margin-top: 1px;
}

.statusbar {
    height: 9px;
    overflow: hidden;
    padding-left: 1px;
    background-color: #f2efec;
    font-size: 11px;
    line-height: 20px;
}

/* things lying over the app */
.pro-btn {
    position: absolute;
    left: 0;
    top: 0;
    width: 36px;
    height: 33px;
    overflow: hidden;
    background: linear-gradient(#b8b8b8, #d8d8d8);
    border-right: 1px solid #444;
    border-bottom: 1px solid #444;
    text-align: center;
    font-size: 8.5px;
    line-height: 10px;
}

.pro-logo {
    display: block;
    width: 36px;
    height: 21px;
}

.win {
    position: absolute;
    background: linear-gradient(#dbe9f8, #b9d6f6);
    border: 1px solid #222;
    box-shadow: 3px 4px 8px rgba(0, 0, 0, 0.7);
}

.load-win {
    left: 75px;
    top: 92px;
    width: 620px;
    height: 276px;
    padding: 0 5px 6px;
    background: radial-gradient(ellipse 26px 22px at 84px 8px, #9fb8cf, transparent), linear-gradient(90deg, #d5e4f4, #b9d7f8 60%, #c4ddf8);
}

.win-title {
    height: 22px;
    display: flex;
    align-items: center;
    justify-content: space-between;
    padding: 0 0 0 2px;
    font-size: 12.2px;
}

.win-close {
    width: 16px;
    height: 16px;
    font-style: normal;
    font-weight: bold;
    font-size: 12px;
    line-height: 14px;
    text-align: center;
    color: #fff;
    background: linear-gradient(#dd7a60, #b8301c);
    border: 1px solid #8a4a40;
    border-radius: 2px;
}

.win-body {
    height: 246px;
    padding: 10px 9px 0 10px;
    background-color: #f0f0f0;
    border: 1px solid #000;
}

.lt-tabs {
    height: 21px;
    display: flex;
    align-items: flex-end;
    white-space: nowrap;
}

.lt-tab {
    height: 19px;
    padding: 0 3px;
    line-height: 19px;
    font-size: 11px;
    background-color: #f0f0f0;
    border: 1px solid #aaa;
    border-bottom: 0;
}

.lt-tab.active {
    height: 21px;
    padding: 0 7px;
    font-size: 11.300px;
    line-height: 18px;
    background-color: #fff;
}

.lt-page {
    height: 202px;
    margin-top: -1px;
    padding: 5px 12px 0 10px;
    border: 1px solid #aaa;
}

.lt-grid {
    display: grid;
    grid-template-columns: 25px 75px 80px 80px 45px 75px 80px 80px 22px;
    grid-template-rows: 19px 28px 17px 16px;
    height: 175px;
    border: 2px solid #666;
    border-bottom: 0;
    align-content: start;
    font-size: 11.300px;
}

.lh {
    display: flex;
    align-items: center;
    justify-content: center;
    background-color: #bdbdbd;
    border-right: 2px solid #222;
    border-bottom: 2px solid #222;
}

.lh-no {
    grid-row: span 2;
}

.lh-span {
    grid-column: span 8;
    padding-left: 270px;
    border-right: 0;
}

.ln {
    padding-top: 1px;
}

.ld {
    padding: 0 3px 0 2px;
    background-color: #fff;
    line-height: 15px;
    border-right: 1px solid #555;
    border-bottom: 1px solid #555;
}

.ld.off {
    background-color: #f0f0f0;
}

.ld.r {
    text-align: right;
}

.ld.ctr {
    text-align: center;
}

.lt-scroll {
    height: 16px;
    margin: 0;
    border: 2px solid #666;
    border-width: 0 2px 2px;
}

.thumb-lt {
    width: 333px;
    margin-right: auto;
    margin-left: 7px;
}

.tools-win {
    left: 971px;
    top: 107px;
    width: 142px;
    height: 62px;
    padding: 0 5px;
}

.win-title.small {
    height: 23px;
    padding: 0 0 0 2px;
    font-size: 12px;
}

.tools-body {
    height: 33px;
    display: flex;
    align-items: center;
    justify-content: space-around;
    background-color: #f0f0f0;
    border: 1px solid #000;
}

.tools-body svg {
    width: 25px;
    height: 25px;
}

.pad-a {
    font-size: 8px;
    font-style: italic;
    fill: #555;
}

.tool-a {
    font-family: "Liberation Serif", serif;
    font-weight: bold;
    font-size: 15px;
    text-anchor: middle;
    fill: #111;
}

.tool-m {
    font-size: 8px;
    fill: #111;
}

.help-mark {
    font-weight: bold;
    font-size: 18px;
    text-anchor: middle;
    fill: #fff;
}

.tip {
    position: absolute;
    padding: 5px 5px 0 5px;
    background: linear-gradient(#ffffff, #e3e4ee);
    border: 1px solid #767676;
    border-radius: 2px;
    box-shadow: 3px 3px 3px rgba(0, 0, 0, 0.4);
    font-family: "Noto Sans", sans-serif;
    font-size: 11.300px;
    line-height: 15px;
    color: #575757;
    white-space: nowrap;
}

.tip-a {
    left: 470px;
    top: 867px;
    width: 190px;
    height: 98px;
}

.tip-b {
    left: 459px;
    top: 1032px;
    width: 196px;
    height: 63px;
    padding-top: 0;
}

.markup {
    position: absolute;
    left: 0;
    top: 0;
    pointer-events: none;
}

.mark-x {
    font-size: 17px;
    font-weight: bold;
    fill: #ed1c24;
}

.note {
    position: absolute;
    left: 721px;
    top: 968px;
    font-family: Lato, sans-serif;
    font-weight: 700;
    font-size: 18px;
    line-height: 23px;
    color: #fd8224;
    white-space: pre;
}
```
